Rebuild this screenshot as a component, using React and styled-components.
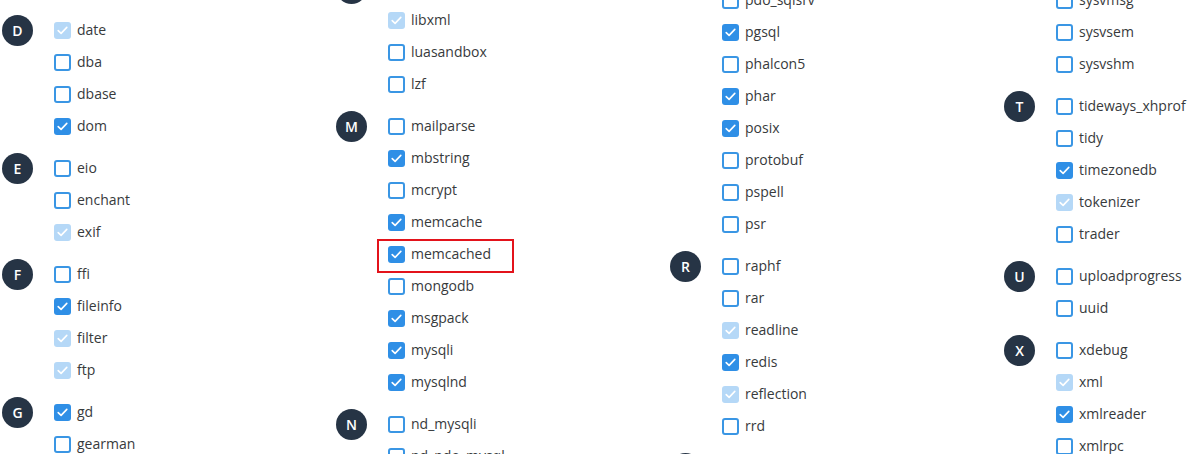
import styled, { createGlobalStyle } from 'styled-components'

const GlobalStyle = createGlobalStyle`
  html, body {
    margin: 0;
    padding: 0;
    background: #fff;
  }
  body {
    font-family: "Open Sans", "Liberation Sans", sans-serif;
    color: #373a3c;
  }
`;

const Viewport = styled.div`
  height: 454px;
  overflow: hidden;
`;

const Columns = styled.div`
  display: grid;
  grid-template-columns: repeat(4, 334px);
  padding-left: 2px;
  align-items: start;
`;

const Column = styled.div`
  display: flex;
  flex-direction: column;
  gap: 10px;
  margin-top: ${p => p.$shift}px;
`;

const Group = styled.section`
  display: flex;
  align-items: flex-start;
`;

const Letter = styled.div`
  flex: 0 0 31px;
  width: 31px;
  height: 31px;
  margin-top: 0.5px;
  border-radius: 50%;
  background: #263445;
  color: #fff;
  font-size: 14px;
  font-weight: 600;
  display: flex;
  align-items: center;
  justify-content: center;
`;

const Items = styled.ul`
  list-style: none;
  margin: 0 0 0 21px;
  padding: 0;
`;

const Item = styled.li`
  position: relative;
  display: flex;
  align-items: center;
  height: 32px;
  font-size: 14px;
  line-height: 20px;
  white-space: nowrap;

  ${p => p.$marked && `
    &::after {
      content: '';
      position: absolute;
      left: -11px;
      top: 1px;
      width: 137px;
      height: 34px;
      box-sizing: border-box;
      border: 2.5px solid #e3131b;
      pointer-events: none;
    }
  `}
`;

const Box = styled.span`
  flex: 0 0 17px;
  width: 17px;
  height: 17px;
  box-sizing: border-box;
  margin-right: 6px;
  border-radius: 3px;
  display: flex;
  align-items: center;
  justify-content: center;
  background: ${p => p.$state === 'on' ? '#2f8fe6' : p.$state === 'locked' ? '#b5d8f7' : '#fff'};
  border: ${p => p.$state === 'off' ? '2px solid #3a96e4' : 'none'};
`;

const Check = () => (
  <svg width="11" height="9" viewBox="0 0 11 9" fill="none">
    <path d="M1.2 4.6 L4.1 7.4 L9.8 1.4" stroke="#fff" strokeWidth="1.6" strokeLinecap="round" strokeLinejoin="round" />
  </svg>
);

// state: on = checked, locked = built-in (checked + disabled), off = unchecked
const columns = [
  {
    shift: 14,
    groups: [
      { letter: 'D', items: [['date', 'locked'], ['dba', 'off'], ['dbase', 'off'], ['dom', 'on']] },
      { letter: 'E', items: [['eio', 'off'], ['enchant', 'off'], ['exif', 'locked']] },
      { letter: 'F', items: [['ffi', 'off'], ['fileinfo', 'on'], ['filter', 'locked'], ['ftp', 'locked']] },
      { letter: 'G', items: [['gd', 'on'], ['gearman', 'off']] },
    ],
  },
  {
    shift: -28,
    groups: [
      { letter: 'L', items: [['ldap', 'off'], ['libxml', 'locked'], ['luasandbox', 'off'], ['lzf', 'off']] },
      { letter: 'M', items: [['mailparse', 'off'], ['mbstring', 'on'], ['mcrypt', 'off'], ['memcache', 'on'], ['memcached', 'on', true], ['mongodb', 'off'], ['msgpack', 'on'], ['mysqli', 'on'], ['mysqlnd', 'on']] },
      { letter: 'N', items: [['nd_mysqli', 'off'], ['nd_pdo_mysql', 'off']] },
    ],
  },
  {
    shift: -48,
    groups: [
      { letter: 'P', items: [['pdo_sqlite', 'on'], ['pdo_sqlsrv', 'off'], ['pgsql', 'on'], ['phalcon5', 'off'], ['phar', 'on'], ['posix', 'on'], ['protobuf', 'off'], ['pspell', 'off'], ['psr', 'off']] },
      { letter: 'R', items: [['raphf', 'off'], ['rar', 'off'], ['readline', 'locked'], ['redis', 'on'], ['reflection', 'locked'], ['rrd', 'off']] },
      { letter: 'S', items: [['session', 'locked']] },
    ],
  },
  {
    shift: -48,
    groups: [
      { letter: 'S', items: [['swoole', 'off'], ['sysvmsg', 'off'], ['sysvsem', 'off'], ['sysvshm', 'off']] },
      { letter: 'T', items: [['tideways_xhprof', 'off'], ['tidy', 'off'], ['timezonedb', 'on'], ['tokenizer', 'locked'], ['trader', 'off']] },
      { letter: 'U', items: [['uploadprogress', 'off'], ['uuid', 'off']] },
      { letter: 'X', items: [['xdebug', 'off'], ['xml', 'locked'], ['xmlreader', 'on'], ['xmlrpc', 'off']] },
    ],
  },
];

function App() {
  return (
    <Viewport>
      <GlobalStyle />
      <Columns>
        {columns.map((col, ci) => (
          <Column key={ci} $shift={col.shift}>
            {col.groups.map(group => (
              <Group key={group.letter}>
                <Letter>{group.letter}</Letter>
                <Items>
                  {group.items.map(([name, state, marked]) => (
                    <Item key={name} $marked={marked}>
                      <Box $state={state}>{state !== 'off' && <Check />}</Box>
                      {name}
                    </Item>
                  ))}
                </Items>
              </Group>
            ))}
          </Column>
        ))}
      </Columns>
    </Viewport>
  )
}

export default App
